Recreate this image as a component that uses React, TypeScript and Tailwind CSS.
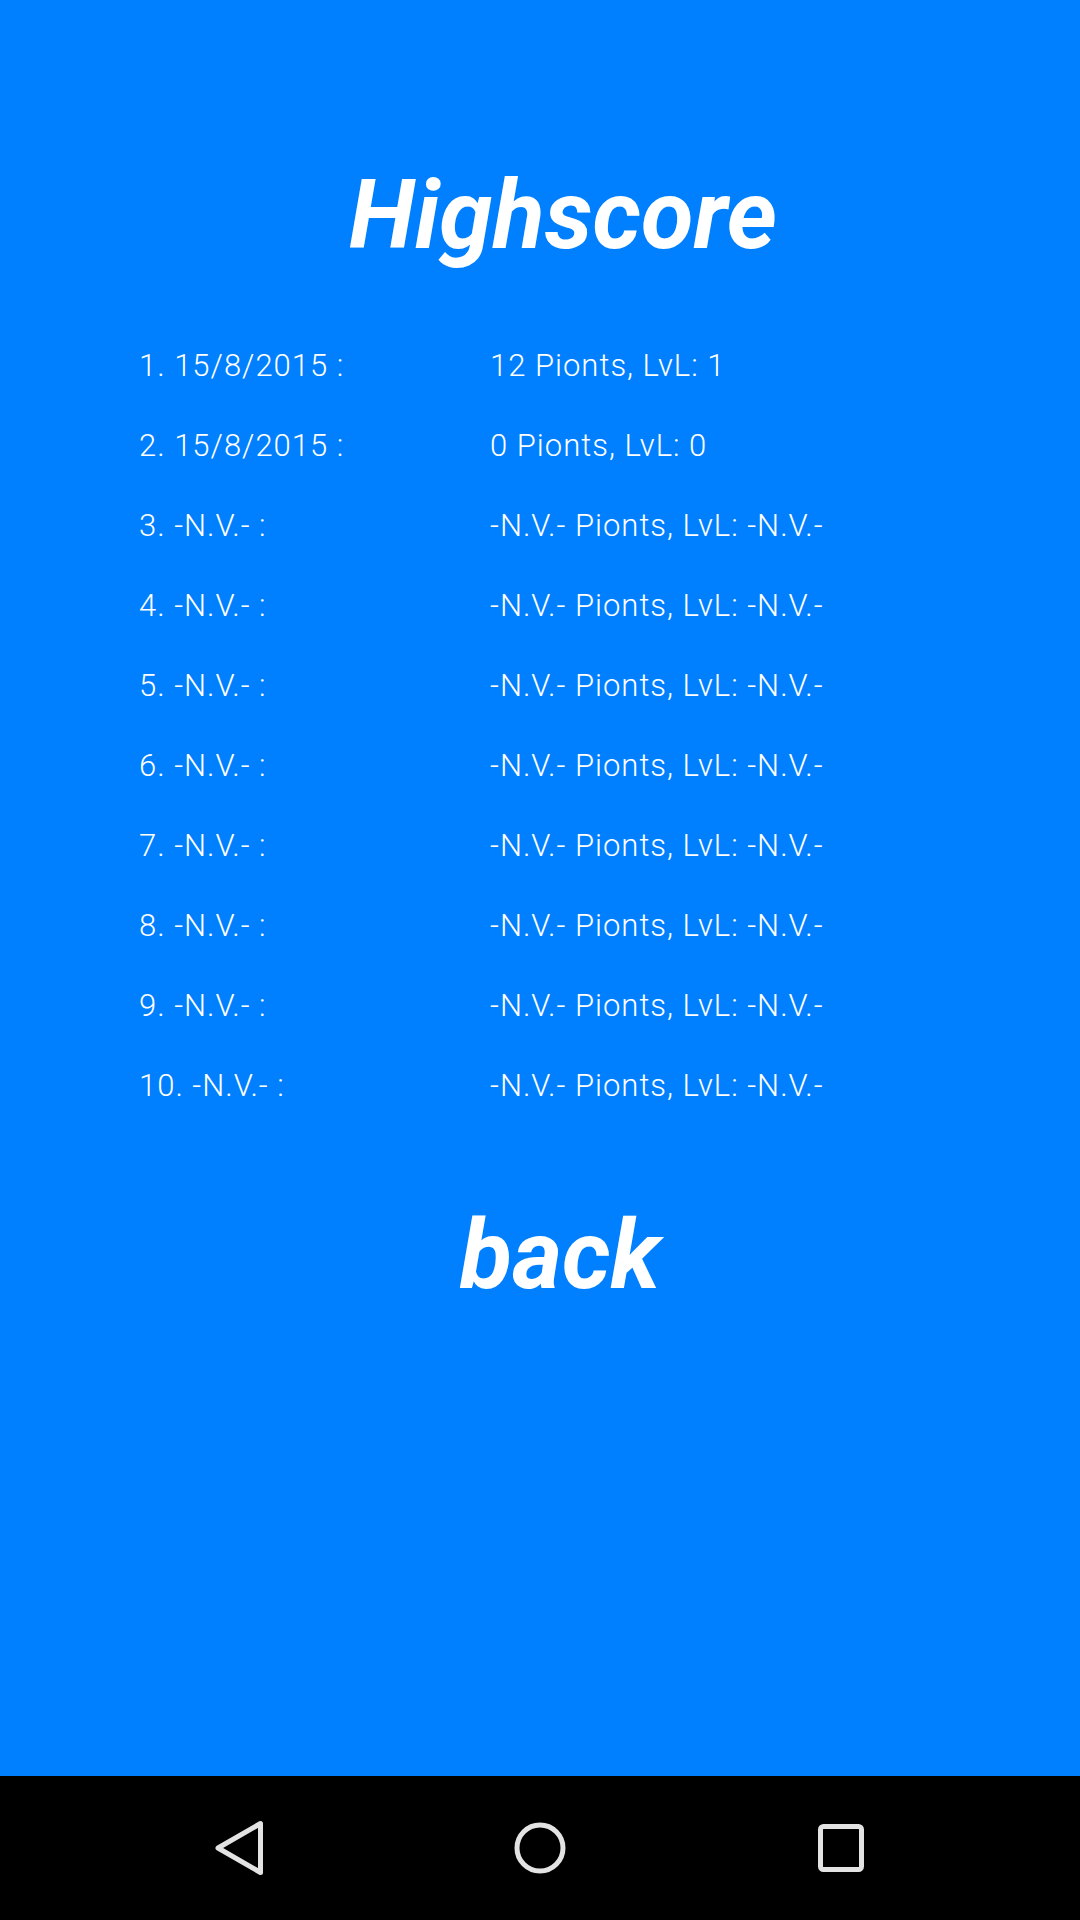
const scores = [
  { rank: "1. 15/8/2015 :", result: "12 Pionts, LvL: 1" },
  { rank: "2. 15/8/2015 :", result: "0 Pionts, LvL: 0" },
  { rank: "3. -N.V.- :", result: "-N.V.- Pionts, LvL: -N.V.-" },
  { rank: "4. -N.V.- :", result: "-N.V.- Pionts, LvL: -N.V.-" },
  { rank: "5. -N.V.- :", result: "-N.V.- Pionts, LvL: -N.V.-" },
  { rank: "6. -N.V.- :", result: "-N.V.- Pionts, LvL: -N.V.-" },
  { rank: "7. -N.V.- :", result: "-N.V.- Pionts, LvL: -N.V.-" },
  { rank: "8. -N.V.- :", result: "-N.V.- Pionts, LvL: -N.V.-" },
  { rank: "9. -N.V.- :", result: "-N.V.- Pionts, LvL: -N.V.-" },
  { rank: "10. -N.V.- :", result: "-N.V.- Pionts, LvL: -N.V.-" },
];

function NavBar() {
  return (
    <div className="h-[144px] bg-black flex items-center justify-center gap-[245px]">
      <svg width="56" height="60" viewBox="0 0 56 60">
        <path d="M49.5 5.5 L49.5 54.5 L7 30 Z" fill="none" stroke="#e3e3e3" strokeWidth="5" strokeLinejoin="round" />
      </svg>
      <svg width="56" height="56" viewBox="0 0 56 56">
        <circle cx="28" cy="28" r="23" fill="none" stroke="#e3e3e3" strokeWidth="5" />
      </svg>
      <svg width="56" height="52" viewBox="0 0 56 52">
        <rect x="7.5" y="4.5" width="41" height="43" rx="3" fill="none" stroke="#e3e3e3" strokeWidth="5" />
      </svg>
    </div>
  );
}

export default function App() {
  return (
    <div className="w-[1080px] h-[1920px] flex flex-col font-['Roboto',sans-serif] text-white">
      <div className="flex-1 bg-[#0080ff] flex flex-col">
        <h1 className="mt-[167px] text-center text-[96px] leading-none font-bold italic pl-[46px]">
          Highscore
        </h1>
        <div className="mt-[63px] pl-[139px]">
          {scores.map((s) => (
            <div key={s.rank} className="flex h-[80px] items-center text-[31px] tracking-[1px] font-light leading-[80px]">
              <span className="w-[351px]">{s.rank}</span>
              <span>{s.result}</span>
            </div>
          ))}
        </div>
        <div className="mt-[81px] text-center text-[96px] leading-none font-bold italic pl-[40px]">
          back
        </div>
      </div>
      <NavBar />
    </div>
  );
}
